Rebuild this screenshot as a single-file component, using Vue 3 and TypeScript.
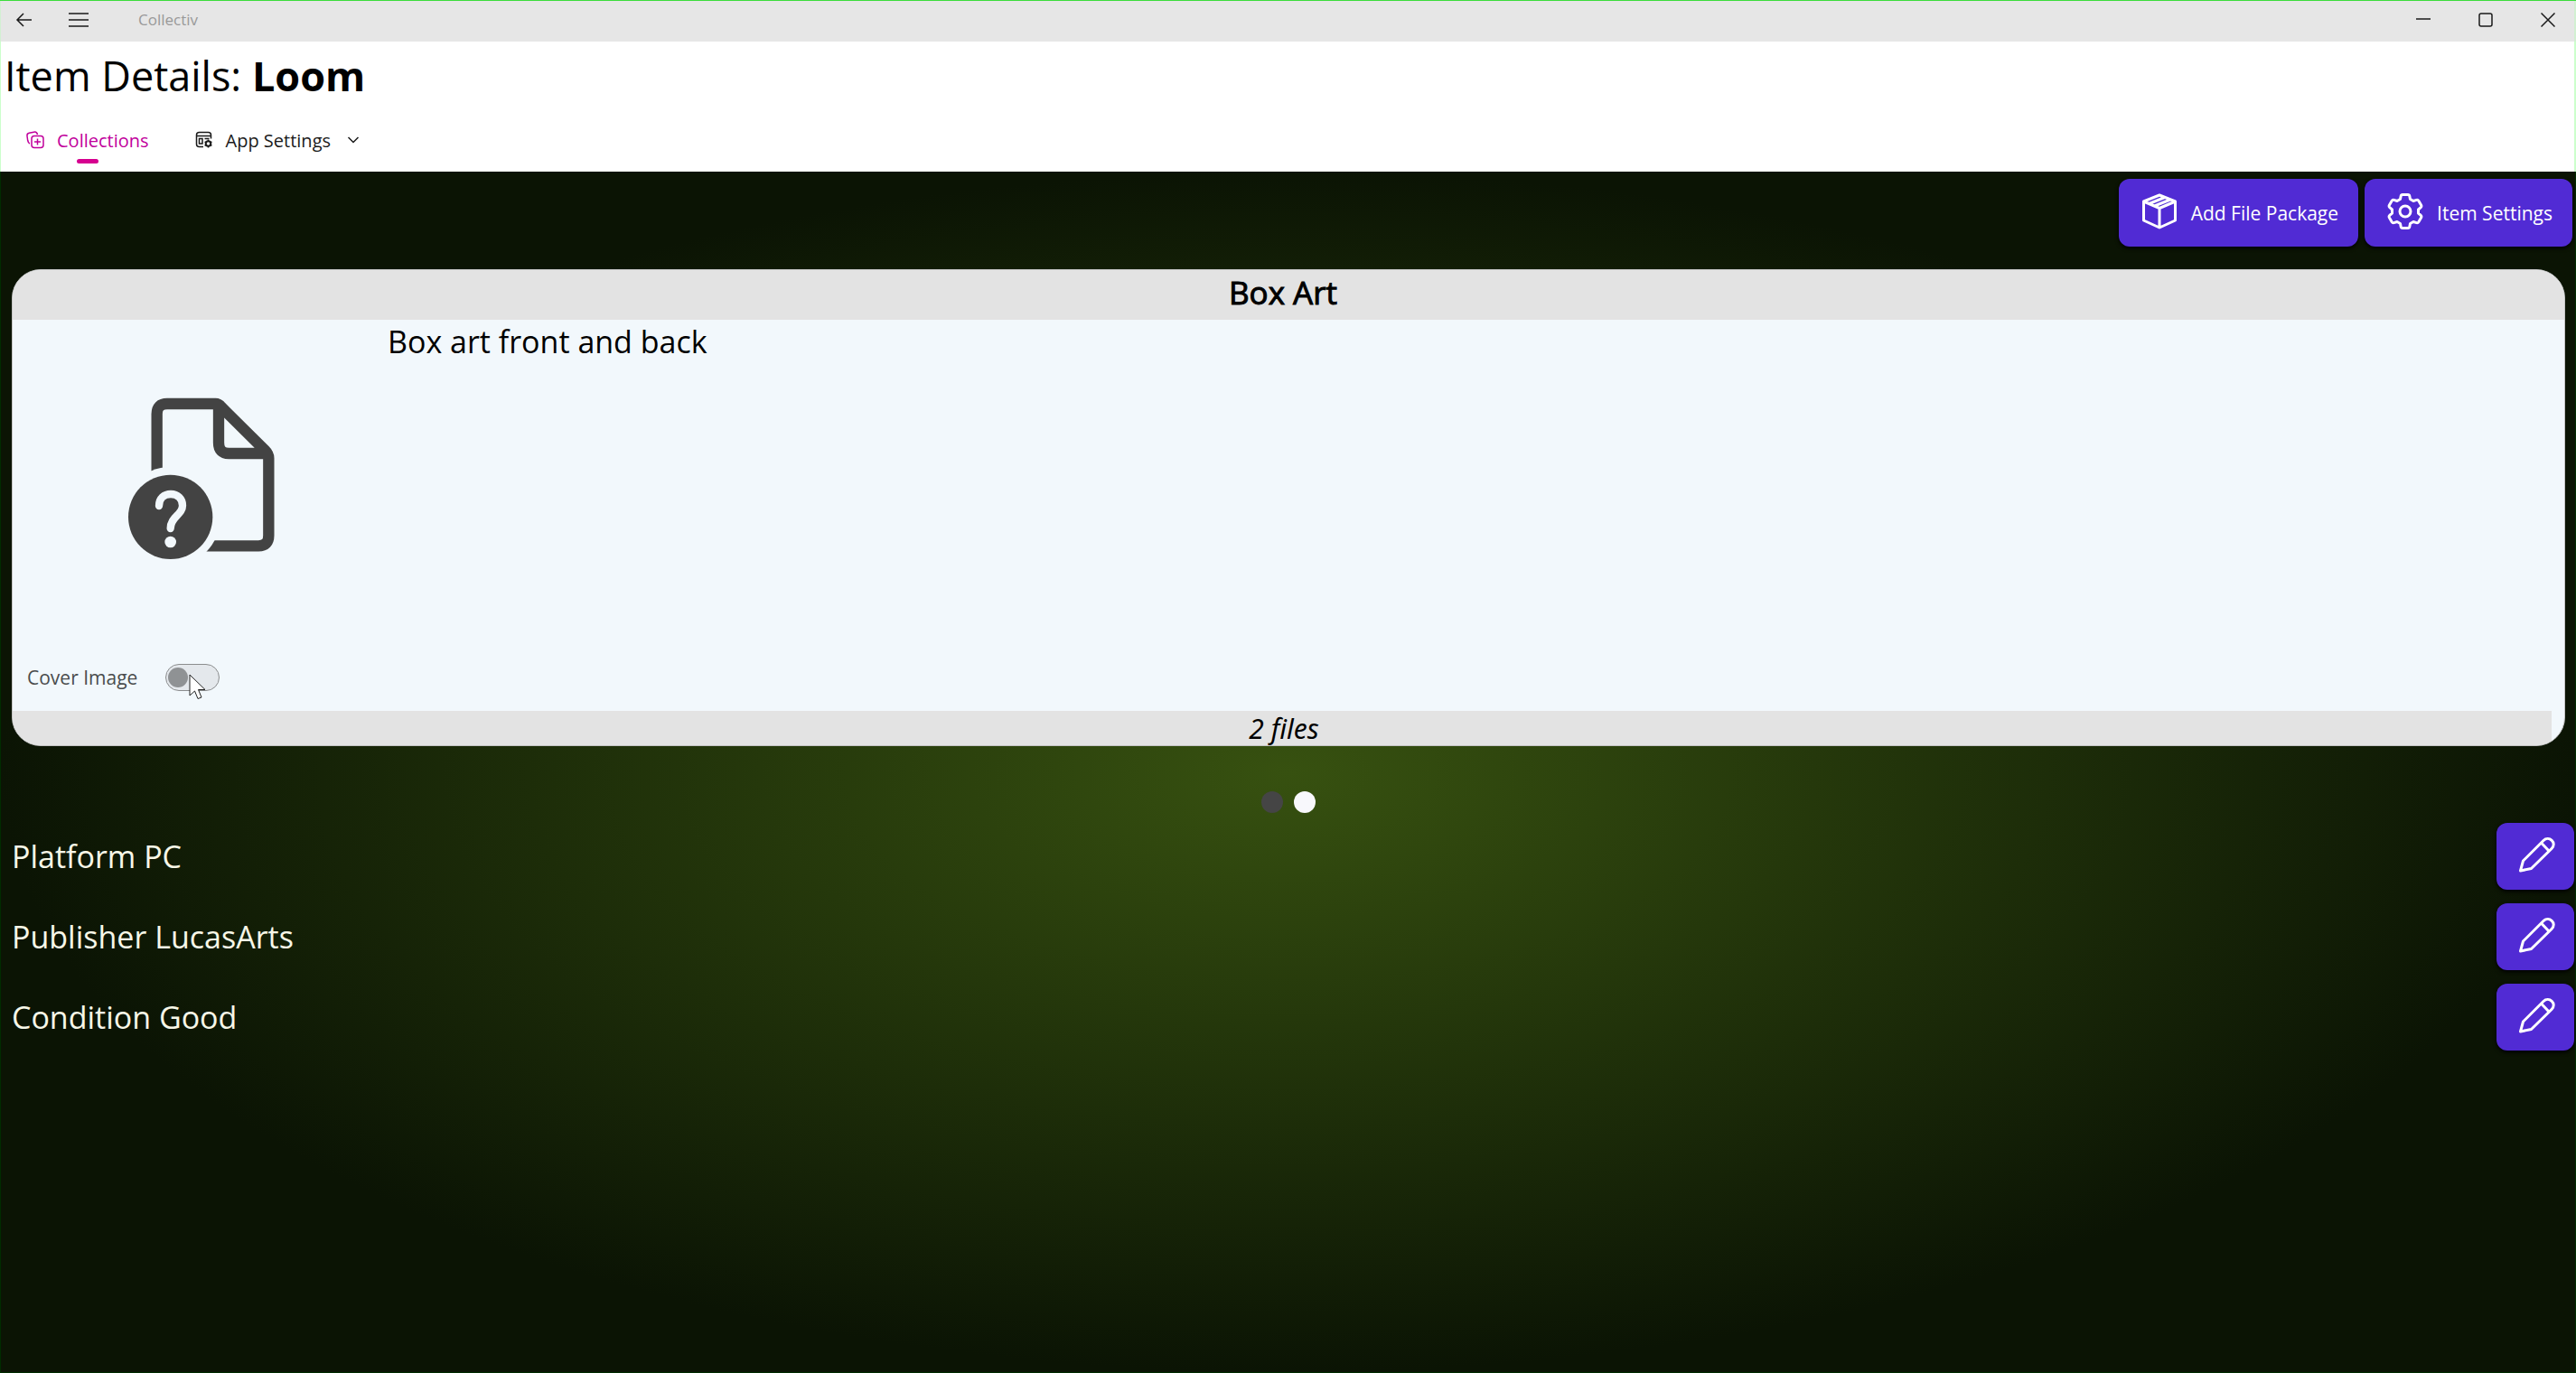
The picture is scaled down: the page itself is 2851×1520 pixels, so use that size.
<script setup lang="ts">
import { ref } from 'vue'

interface Field {
  name: string
  value: string
}

const title = 'Loom'
const isCover = ref(false)
const activePage = ref(1)
const pages = [0, 1]
const fields: Field[] = [
  { name: 'Platform', value: 'PC' },
  { name: 'Publisher', value: 'LucasArts' },
  { name: 'Condition', value: 'Good' },
]
</script>

<template>
  <div class="window">
    <header class="titlebar">
      <button class="bar-btn" aria-label="Back">
        <svg width="20" height="16" viewBox="0 0 20 16"><path d="M18 8H2M9 1L2 8l7 7" /></svg>
      </button>
      <button class="bar-btn menu" aria-label="Menu">
        <svg width="24" height="16" viewBox="0 0 24 16"><path d="M1 1h22M1 8h22M1 15h22" /></svg>
      </button>
      <span class="app-name">Collectiv</span>
      <div class="window-controls">
        <button class="bar-btn" aria-label="Minimize">
          <svg width="16" height="16" viewBox="0 0 16 16"><path d="M0 7h16" /></svg>
        </button>
        <button class="bar-btn" aria-label="Maximize">
          <svg width="16" height="16" viewBox="0 0 16 16"><rect x="1" y="1" width="14" height="14" rx="2" /></svg>
        </button>
        <button class="bar-btn" aria-label="Close">
          <svg width="16" height="16" viewBox="0 0 16 16"><path d="M.5.500l15 15M15.500.500l-15 15" /></svg>
        </button>
      </div>
    </header>

    <div class="heading">
      <h1>Item Details: <strong>{{ title }}</strong></h1>
      <nav class="tabs">
        <a href="#collections" class="tab active">
          <svg width="20" height="20" viewBox="0 0 20 20">
            <path d="M4 14C2.500 13.500 2 12 1.700 10.500L1 5.500C.8 3.500 1.600 2.600 3.200 2.300L8.500 1.200C10.500.8 12 1.500 12.500 4" />
            <rect x="6" y="5.500" width="13" height="13" rx="3" />
            <path d="M12.500 8.500v7M9 12h7" />
          </svg>
          Collections
        </a>
        <a href="#settings" class="tab">
          <svg width="20" height="20" viewBox="0 0 20 20">
            <path d="M9 17.500H4.500C2.500 17.500 1.500 16.500 1.500 14.500V4.500C1.500 2.500 2.500 1.500 4.500 1.500h10C16.500 1.500 17.500 2.500 17.500 4.500V8.500M1.500 5.500h16M4.500 8.500h3.500v5.500H4.500zM10.500 8.500h5" />
            <circle class="cog" cx="14.500" cy="14" r="2.800" />
            <path d="M14.500 9.500v2M14.500 16.500v2M10.600 11.800l1.700 1M16.700 15.300l1.700 1M18.400 11.800l-1.700 1M12.300 15.300l-1.700 1" />
          </svg>
          App Settings
          <svg class="chevron" width="14" height="8" viewBox="0 0 14 8"><path d="M1.500 1L7 6.500 12.500 1" /></svg>
        </a>
      </nav>
    </div>

    <main class="page">
      <div class="toolbar">
        <button class="primary">
          <svg width="40" height="40" viewBox="0 0 40 40">
            <path d="M20 2L37.500 9V30L20 38 2.500 30V9ZM2.500 9L20 16.500 37.500 9M20 16.500V38M8.500 11.500L26 4.500M14.500 14L32 7" />
          </svg>
          Add File Package
        </button>
        <button class="primary">
          <svg width="40" height="40" viewBox="0 0 40 40">
            <path d="M17 1.500h6Q24.500 1.500 24.800 3L25.500 6.500 29 8.500 32.500 7.400Q34 7 34.800 8.300L37.700 13.300Q38.300 14.700 37.200 15.700L34.500 18v4L37.200 24.300Q38.300 25.300 37.700 26.700L34.800 31.700Q34 33 32.500 32.600L29 31.500 25.500 33.500 24.800 37Q24.500 38.500 23 38.500H17Q15.500 38.500 15.200 37L14.500 33.500 11 31.500 7.500 32.600Q6 33 5.200 31.700L2.300 26.700Q1.700 25.300 2.800 24.300L5.500 22V18L2.800 15.700Q1.700 14.700 2.300 13.300L5.200 8.300Q6 7 7.500 7.400L11 8.500 14.500 6.500 15.200 3Q15.500 1.500 17 1.500Z" />
            <circle cx="20" cy="20" r="6" />
          </svg>
          Item Settings
        </button>
      </div>

      <section class="card">
        <h2>Box Art</h2>
        <div class="card-body">
          <div class="preview">
            <svg class="file-icon" width="200" height="220" viewBox="0 0 600 660">
              <path class="sheet" d="M131 320V115Q131 81 165 81H325Q336 81 345 92L490 236Q502 248 502 262V518Q502 553 468 553H280M336 85V210Q336 246 370 246H500" />
              <circle class="gap" cx="176" cy="457" r="166" />
              <circle class="badge" cx="176" cy="457" r="140" />
              <path class="mark" d="M138 420C138 395 155 381 177 381C200 381 216 397 216 419C216 450 176 456 176 495" />
              <circle class="gap" cx="176" cy="540" r="19" />
            </svg>
            <label class="cover">
              Cover Image
              <span class="switch">
                <input v-model="isCover" type="checkbox" role="switch" />
                <svg class="pointer" width="20" height="30" viewBox="0 0 20 30">
                  <path d="M1 1V24L6.500 19L10 27.500L14 26L10.500 17.500H18Z" />
                </svg>
              </span>
            </label>
          </div>
          <p class="description">Box art front and back</p>
        </div>
        <p class="count">2 files</p>
      </section>

      <div class="dots">
        <button
          v-for="page in pages"
          :key="page"
          class="dot"
          :class="{ current: page === activePage }"
          :aria-label="`Package ${page + 1}`"
          @click="activePage = page"
        ></button>
      </div>

      <ul class="fields">
        <li v-for="field in fields" :key="field.name">
          <span>{{ field.name }} {{ field.value }}</span>
          <button class="primary edit" :aria-label="`Edit ${field.name}`">
            <svg width="40" height="40" viewBox="0 0 40 40">
              <path d="M1.500 38L4.500 27L27 4.500C33-1.500 42.500 7 36 13.500L13.500 35.500ZM24.500 7L33 16" />
            </svg>
          </button>
        </li>
      </ul>
    </main>
  </div>
</template>

<style>
body {
  margin: 0;
}
</style>

<style scoped>
.window {
  display: flex;
  flex-direction: column;
  min-height: 100vh;
  box-sizing: border-box;
  border-top: 1px solid #3bdc3b;
  background: #fff;
  color: #000;
  font-family: "Open Sans", "Noto Sans", sans-serif;
}

h1,
h2,
p,
ul {
  margin: 0;
  padding: 0;
  font-weight: 400;
}

button {
  margin: 0;
  padding: 0;
  border: 0;
  background: none;
  font: inherit;
  color: inherit;
}

svg {
  flex: none;
  fill: none;
  stroke: currentColor;
  stroke-width: 2;
}

.titlebar {
  display: flex;
  align-items: center;
  height: 45px;
  padding: 0 21px 3px 16px;
  background: #e6e6e6;
  border-left: 1px solid #d2f0d2;
  border-right: 2px solid #d2f0d2;
  box-sizing: border-box;
}

.bar-btn {
  display: flex;
}

.bar-btn svg {
  stroke: #1a1a1a;
  stroke-width: 1.500;
}

.menu {
  margin-left: 38px;
}

.app-name {
  margin-left: 54px;
  font-size: 17px;
  line-height: 24px;
  color: #999;
}

.window-controls {
  display: flex;
  gap: 53px;
  margin-left: auto;
}

.heading {
  border-left: 1px solid #ccffcc;
  border-right: 2px solid #ccffcc;
}

h1 {
  padding-left: 4px;
  font-size: 45px;
  line-height: 76px;
}

h1 strong {
  font-weight: 700;
}

.tabs {
  display: flex;
  height: 68px;
  padding-left: 28px;
  gap: 51px;
}

.tab {
  position: relative;
  display: flex;
  align-items: center;
  gap: 14px;
  color: #1a1a1a;
  font-size: 20px;
  line-height: 28px;
  text-decoration: none;
}

.tab svg {
  margin-bottom: 2px;
  stroke-width: 1.500;
}

.tab .chevron {
  margin-left: 4px;
}

.tab .cog {
  stroke-width: 2;
}

.active {
  color: #c1009c;
}

.active::after {
  content: "";
  position: absolute;
  left: 50%;
  bottom: 9px;
  width: 24px;
  height: 5px;
  margin-left: -12px;
  border-radius: 3px;
  background: #d6008f;
}

.page {
  flex: 1;
  box-sizing: border-box;
  border: 1px solid #002c00;
  border-top: 0;
  background: radial-gradient(50% 50% at 50% 50%, #375110, #0b1404);
}

.toolbar {
  display: flex;
  justify-content: flex-end;
  gap: 7px;
  padding: 8px 3px 0;
}

.primary {
  display: flex;
  align-items: center;
  gap: 15px;
  height: 75px;
  box-sizing: border-box;
  padding: 0 22px 0 25px;
  border-radius: 12px;
  background: #512bd4;
  box-shadow: 0 2px 4px #000;
  color: #fff;
  font-size: 21px;
}

.primary svg {
  margin-bottom: 4px;
  stroke-width: 3;
  stroke-linejoin: round;
}

.card {
  margin: 25px 11px 0 12px;
  overflow: hidden;
  border: 1px solid #c4c4c4;
  border-radius: 32px;
  background: #f2f8fc;
}

h2 {
  padding: 0 12px 5px 0;
  background: #e3e3e3;
  font-size: 35px;
  line-height: 50px;
  text-align: center;
  -webkit-text-stroke: 1px #000;
}

.card-body {
  display: flex;
  height: 433px;
}

.preview {
  display: flex;
  flex-direction: column;
  justify-content: space-between;
  width: 415px;
  box-sizing: border-box;
  padding: 66px 0 21px 16px;
}

.file-icon {
  margin-left: 100px;
}

.sheet {
  stroke: #434343;
  stroke-width: 37;
}

.gap {
  fill: #f2f8fc;
  stroke: none;
}

.badge {
  fill: #434343;
  stroke: none;
}

.mark {
  stroke: #f2f8fc;
  stroke-width: 25;
  stroke-linecap: round;
}

.cover {
  display: flex;
  align-items: center;
  gap: 31px;
  color: #4a4c4d;
  font-size: 21px;
  line-height: 32px;
}

.switch {
  position: relative;
  display: flex;
}

.switch input {
  appearance: none;
  display: flex;
  align-items: center;
  width: 60px;
  height: 30px;
  margin: 0;
  padding: 0 2px;
  box-sizing: border-box;
  border: 1px solid #8b8d8e;
  border-radius: 15px;
  background: #e4e8ec;
}

.switch input::before {
  content: "";
  width: 22px;
  height: 22px;
  border-radius: 50%;
  background: #8f9294;
}

.switch input:checked {
  justify-content: flex-end;
}

.pointer {
  position: absolute;
  left: 26px;
  top: 11px;
  fill: #fff;
  stroke: #222;
  stroke-width: 1;
}

.description {
  font-size: 34px;
  line-height: 48px;
}

.count {
  margin-right: 14px;
  padding: 2px 0 0 4px;
  background: #e3e3e3;
  font-family: "Noto Sans", "Open Sans", sans-serif;
  font-size: 30px;
  font-style: italic;
  line-height: 36px;
  text-align: center;
}

.dots {
  display: flex;
  justify-content: center;
  gap: 12px;
  padding: 50px 0 11px;
}

.dot {
  width: 24px;
  height: 24px;
  border-radius: 50%;
  background: #454545;
}

.current {
  background: #f8f8fc;
}

.fields {
  display: flex;
  flex-direction: column;
  gap: 15px;
  padding: 0 1px 0 12px;
  list-style: none;
}

.fields li {
  display: flex;
  align-items: center;
  justify-content: space-between;
  color: #f7f7e8;
  font-size: 34px;
  line-height: 50px;
}

.edit {
  height: 74px;
  padding: 0 21px 0 25px;
}
</style>
